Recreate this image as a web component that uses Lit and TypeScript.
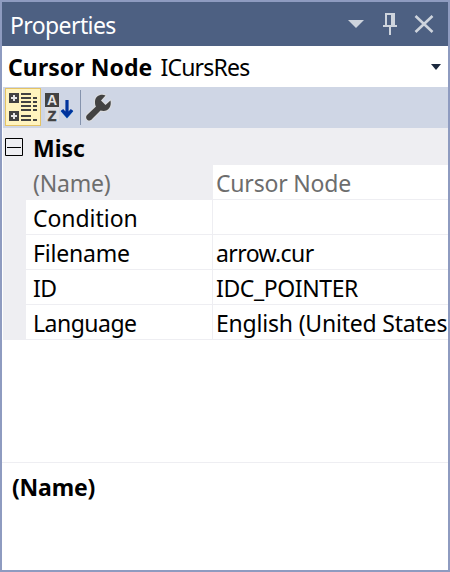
import { LitElement, html, css } from "lit";
import { customElement } from "lit/decorators.js";

const rows = [
  { name: "(Name)", value: "Cursor Node", cls: "readonly", n: "ls2", v: "ls2" },
  { name: "Condition", value: "", cls: "", n: "ls1", v: "" },
  { name: "Filename", value: "arrow.cur", cls: "", n: "ls2", v: "ls6" },
  { name: "ID", value: "IDC_POINTER", cls: "", n: "ls6", v: "ls4" },
  { name: "Language", value: "English (United States", cls: "", n: "ls5", v: "ls2" },
];

@customElement("app-root")
export class AppRoot extends LitElement {
  static styles = css`
    :host {
      display: flex;
      flex-direction: column;
      box-sizing: border-box;
      width: 450px;
      height: 572px;
      border: 2px solid #8e9bc0;
      background: #fff;
      color: #000;
      font: 23px/37px "Noto Sans", "Open Sans", sans-serif;
      white-space: nowrap;
      overflow: hidden;
    }
    svg { display: block; flex: none; }
    .ls1 { letter-spacing: -0.05px; }
    .ls2 { letter-spacing: -0.2px; }
    .ls4 { letter-spacing: -0.4px; }
    .ls5 { letter-spacing: -0.5px; }
    .ls6 { letter-spacing: -0.6px; }
    .ls8 { letter-spacing: -0.8px; }
    .title { flex: none; height: 44px; box-sizing: border-box; padding-left: 8px; display: flex; align-items: center; background: #4d6082; color: #fff; }
    .title span { padding-top: 2px; }
    .title svg { margin-left: auto; }
    .object { flex: none; height: 41px; display: flex; align-items: center; padding-left: 6px; }
    .object b, .object span { padding-top: 2px; }
    .object b { margin-right: 8px; letter-spacing: 0.08px; }
    .object svg { margin-left: auto; }
    .tools { flex: none; height: 41px; margin-left: 1px; background: #cfd6e5; }
    .letter { font: 700 14px "Liberation Sans", sans-serif; text-anchor: middle; }
    .grid { flex: none; margin-left: 1px; height: 212px; box-sizing: border-box; padding-top: 2px; background: #eeeef2; }
    .cat { display: flex; height: 35px; font-weight: 700; }
    .cat svg { margin: 8px 10px 0 2px; }
    .row { display: flex; height: 35px; padding-left: 23px; }
    .cell { height: 34px; background: #fff; box-sizing: border-box; overflow: hidden; }
    .name { width: 186px; margin-right: 1px; padding-left: 7px; }
    .value { width: 235px; padding-left: 3px; }
    .readonly { color: #6d6d6d; }
    .readonly .name { background: #eeeef2; }
    .blank { flex: none; height: 122px; }
    .help { flex: 1; border-top: 1px solid #eeeef2; padding: 6px 0 0 10px; font-weight: 700; }
  `;

  render() {
    return html`
      <div class="title"><span class="ls6">Properties</span>
        <svg width="110" height="44" fill="#ced4dd">
          <path d="M10 18h16l-8 8z" />
          <path fill-rule="evenodd" d="M47 11h10v12h2v2h-6v8h-2v-8h-6v-2h2zM49 13v10h4v-10z" />
          <path d="M77.500 14l17 16M94.500 14l-17 16" fill="none" stroke="#ced4dd" stroke-width="2.6" />
        </svg>
      </div>
      <div class="object"><b>Cursor Node</b><span class="ls8">ICursRes</span>
        <svg width="18" height="10"><path d="M1 2h10l-5 6z" fill="#1b293e" /></svg>
      </div>
      <div class="tools">
        <svg width="112" height="41" viewBox="0 1 112 41">
          <rect x="2.500" y="2.500" width="35" height="37" fill="#fff4bf" stroke="#e5c365" />
          <path fill="#424242" d="M6 7h10v10h-10zM6 25h10v10h-10zM18 7h10v2h-10zM18 11h10v2h-10zM18 15h10v2h-10zM18 19h10v2h-10zM18 23h10v2h-10zM18 29h10v2h-10zM18 33h10v2h-10zM30 11h4v2h-4zM30 15h4v2h-4zM30 19h4v2h-4zM30 23h4v2h-4zM30 33h4v2h-4z" />
          <path fill="#e6e6e6" d="M10 9h2v2h2v2h-2v2h-2v-2h-2v-2h2zM10 27h2v2h2v2h-2v2h-2v-2h-2v-2h2z" />
          <path fill="#dcdee2" d="M42 7h14v28h-14z" />
          <path fill="#424242" d="M42 7h14v14h-14z" />
          <text class="letter" x="49" y="19" fill="#e6e6e6">A</text>
          <text class="letter" x="49" y="35" fill="#424242" stroke="#424242" stroke-width=".6">Z</text>
          <path fill="none" stroke="#1b7fd0" stroke-width="2" d="M58.500 24.500l5.500 6.500 5.500-6.500" />
          <path fill="none" stroke="#00339c" stroke-width="3.200" d="M64 14v15M59 24l5 5.500 5-5.500" />
          <path fill="#8593ad" d="M77 4h1v35h-1z" />
          <path fill="#424242" stroke="#dcdddf" stroke-width="2" paint-order="stroke" stroke-linejoin="round" d="M102.500 9.500C98 7.500 92 10 92 16C92 18 92.300 19.500 93 20.500L84 29C82.500 30.500 83 33 84.500 34C86 35 88 34.500 89 33L97.500 24.500C104 26.500 109 22 107.500 14.500L102.500 19L98 14.500Z" />
        </svg>
      </div>
      <div class="grid">
        <div class="cat"><svg width="18" height="18"><path d="M.5 .5h17v17h-17zM2 9.500h14" fill="none" stroke="#000" /></svg><span>Misc</span></div>
        ${rows.map((r) => html`<div class="row ${r.cls}">
          <div class="cell name"><span class=${r.n}>${r.name}</span></div>
          <div class="cell value"><span class=${r.v}>${r.value}</span></div>
        </div>`)}
      </div>
      <div class="blank"></div>
      <div class="help"><span class="ls2">(Name)</span></div>
    `;
  }
}
